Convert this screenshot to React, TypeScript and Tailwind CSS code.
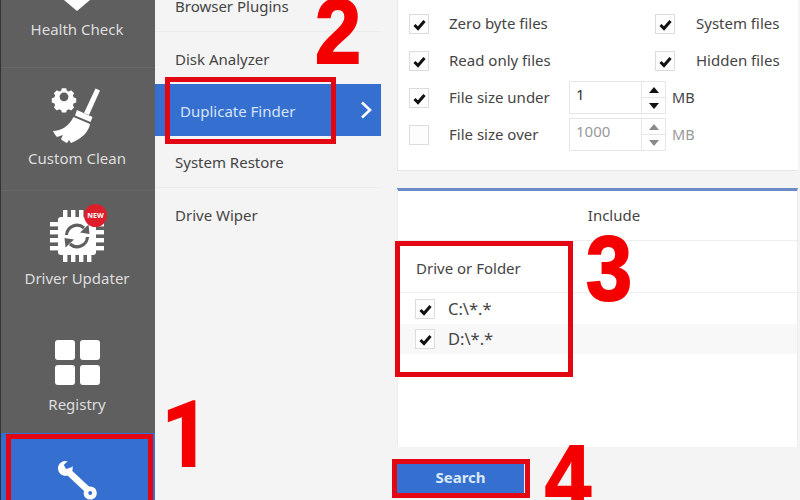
import React from "react";

const Check = () => (
  <svg viewBox="0 0 19 19" className="w-[19px] h-[19px] block">
    <path d="M4.5 10 L8 13.5 L14.5 6" fill="none" stroke="#111" strokeWidth="3" />
  </svg>
);

function Box({ on, muted }: { on?: boolean; muted?: boolean }) {
  return (
    <span className={`block w-[20px] h-[20px] shrink-0 border ${muted ? "border-[#e2e2e2]" : "border-[#dcdcdc]"} bg-[#fdfdfd]`}>
      {on ? <Check /> : null}
    </span>
  );
}

function Spin({ value, muted }: { value: string; muted?: boolean }) {
  const fill = muted ? "#8a8a8a" : "#111";
  return (
    <div className="flex items-center">
      <div className="flex w-[97px] h-[33px] border border-[#e6e6e6] bg-white">
        <div className={`w-[71px] pl-[6px] text-[15px] leading-[24px] ${muted ? "text-[#999]" : "text-[#333]"}`}>{value}</div>
        <div className="flex-1 flex flex-col border-l border-[#e6e6e6]">
          <div className="h-[16px] flex items-center justify-center border-b border-[#e6e6e6]">
            <svg viewBox="0 0 10 6" className="w-[10px] h-[6px]"><path d="M5 0 L10 6 L0 6 Z" fill={fill} /></svg>
          </div>
          <div className="flex-1 flex items-center justify-center">
            <svg viewBox="0 0 10 6" className="w-[10px] h-[6px]"><path d="M0 0 L10 0 L5 6 Z" fill={fill} /></svg>
          </div>
        </div>
      </div>
      <span className={`ml-[6px] text-[14.5px] ${muted ? "text-[#999]" : "text-[#444]"}`}>MB</span>
    </div>
  );
}

const Broom = () => (
  <svg viewBox="0 0 70 62" className="w-[70px] h-[62px] block">
    <g transform="translate(22 14)">
      <path d="M-2.6 -10.4 h5.2 l.8 3 2.6 1.1 2.7 -1.6 3.7 3.7 -1.6 2.7 1.1 2.6 3 .8 v5.2 l-3 .8 -1.1 2.6 1.6 2.7 -3.7 3.7 -2.7 -1.6 -2.6 1.1 -.8 3 h-5.2 l-.8 -3 -2.6 -1.1 -2.7 1.6 -3.7 -3.7 1.6 -2.7 -1.1 -2.6 -3 -.8 v-5.2 l3 -.8 1.1 -2.6 -1.6 -2.7 3.7 -3.7 2.7 1.6 2.6 -1.1 Z" transform="scale(.82) translate(0 -1.6)" fill="#fff" />
      <circle cx="0" cy="-1.2" r="4.4" fill="#5f5f5f" />
    </g>
    <path d="M53.5 4.5 L58 6.5 L47 31 L42 29 Z" fill="#fff" />
    <path d="M35 26 L50.5 33 L48.5 38 L33 31.5 Z" fill="#fff" />
    <path d="M31.5 33 L48 40 C47 47 40 55 29 59 L27 56 L25 59 C22 58 20 56 19 55 L21 51 L15 53 C13 51 12 49 11 47 C19 47 27 42 31.5 33 Z" fill="#fff" />
  </svg>
);

const Chip = () => (
  <svg viewBox="0 0 54 54" className="w-[54px] h-[54px] block">
    <g fill="#fff">
      <rect x="8" y="8" width="38" height="38" rx="3" />
      {[13, 21, 29, 37].map((p) => (
        <React.Fragment key={p}>
          <rect x={p} y="1" width="4.4" height="9" />
          <rect x={p} y="44" width="4.4" height="9" />
          <rect x="0" y={p} width="10" height="4.4" />
          <rect x="44" y={p} width="10" height="4.4" />
        </React.Fragment>
      ))}
    </g>
    <g fill="none" stroke="#5f5f5f" strokeWidth="3.2">
      <path d="M16.5 26 A10.5 10.5 0 0 1 34 19" />
      <path d="M37.5 28 A10.5 10.5 0 0 1 20 35" />
    </g>
    <path d="M30 23.5 L38.5 15.5 L39.5 25 Z" fill="#5f5f5f" />
    <path d="M24 30.5 L15.5 38.5 L14.5 29 Z" fill="#5f5f5f" />
  </svg>
);

const Wrench = () => (
  <svg viewBox="0 0 52 54" className="w-[52px] h-[54px] block">
    <path d="M12 15 L44 45" stroke="#fff" strokeWidth="8.5" fill="none" />
    <circle cx="11" cy="13.5" r="9.5" fill="#fff" />
    <path d="M16 2 L9 9 L12 14 L19 12 L24 4 Z" fill="#3570d0" />
    <circle cx="43" cy="45" r="8.5" fill="#fff" />
    <circle cx="43" cy="45" r="2.5" fill="#3570d0" />
  </svg>
);

function RedBox({ className }: { className: string }) {
  return <div className={`absolute border-[5px] border-[#e30613] ${className}`} />;
}

function Numeral({ n, className }: { n: string; className: string }) {
  return (
    <span className={`absolute text-[90px] leading-none font-bold text-[#f50000] [-webkit-text-stroke:2px_#f50000] scale-x-[0.92] ${className}`}>
      {n}
    </span>
  );
}

export default function App() {
  return (
    <div className="relative flex w-[800px] h-[500px] overflow-hidden bg-[#f4f4f4] font-['Noto_Sans',sans-serif] text-[15px] text-[#444]">
      <div className="w-px bg-[#333]" />
      <nav className="w-[154px] flex flex-col bg-[#5f5f5f] text-[#dedede]">
        <div className="h-[68px] flex flex-col items-center pr-[2px] border-b border-[#676767]">
          <svg viewBox="0 0 26 11" className="w-[26px] h-[11px] block"><path d="M0 0 H26 L13 11 Z" fill="#fff" /></svg>
          <span className="mt-[8px] leading-5">Health Check</span>
        </div>
        <div className="h-[123px] flex flex-col items-center pt-[16px] pr-[2px] border-b border-[#676767]">
          <Broom />
          <span className="mt-[2px] leading-5">Custom Clean</span>
        </div>
        <div className="h-[122px] flex flex-col items-center pt-[18px] pr-[2px]">
          <div className="relative">
            <Chip />
            <span className="absolute -top-[5px] -right-[3px] w-[23px] h-[23px] rounded-full bg-[#dc1f2b] text-white text-[7px] font-bold leading-[23px] text-center">NEW</span>
          </div>
          <span className="mt-[5px] leading-5">Driver Updater</span>
        </div>
        <div className="h-[120px] flex flex-col items-center pt-[27px] pr-[2px]">
          <div className="grid grid-cols-2 gap-[5px]">
            <div className="w-[20px] h-[20px] rounded-[3px] bg-white" />
            <div className="w-[20px] h-[20px] rounded-[3px] bg-white" />
            <div className="w-[20px] h-[20px] rounded-[3px] bg-white" />
            <div className="w-[20px] h-[20px] rounded-[3px] bg-white" />
          </div>
          <span className="mt-[9px] leading-5">Registry</span>
        </div>
        <div className="flex-1 flex flex-col items-center pt-[25px] pr-[2px] bg-[#3570d0] overflow-hidden">
          <Wrench />
        </div>
      </nav>

      <div className="w-[226px] flex flex-col text-[#444]">
        <div className="h-[32px] flex items-end pl-[20px] pb-[15px] border-b border-[#ececec] leading-5">Browser Plugins</div>
        <div className="h-[52px] flex items-center pl-[20px] pt-[2px]">Disk Analyzer</div>
        <div className="h-[52px] flex items-center justify-between pl-[25px] pr-[9px] bg-[#3570d0] text-[#d5e4f8]">
          <span className="pt-[3px]">Duplicate Finder</span>
          <svg viewBox="0 0 12 18" className="w-[12px] h-[18px]"><path d="M2 1.5 L10 9 L2 16.5" fill="none" stroke="#fff" strokeWidth="2.6" /></svg>
        </div>
        <div className="h-[52px] flex items-center pl-[20px] pt-[2px] border-b border-[#ececec]">System Restore</div>
        <div className="h-[52px] flex items-center pl-[20px] pt-[2px]">Drive Wiper</div>
      </div>

      <main className="flex-1 flex flex-col pl-[16px] pr-[2px]">
        <section className="h-[171px] bg-white border-l border-b border-[#e6e6e6] pt-[5px] pl-[11px]">
          <div className="h-[37px] flex items-center">
            <Box on />
            <span className="ml-[20px] w-[206px]">Zero byte files</span>
            <Box on />
            <span className="ml-[21px]">System files</span>
          </div>
          <div className="h-[37px] flex items-center">
            <Box on />
            <span className="ml-[20px] w-[206px]">Read only files</span>
            <Box on />
            <span className="ml-[21px]">Hidden files</span>
          </div>
          <div className="h-[37px] flex items-center">
            <Box on />
            <span className="ml-[20px] w-[120px]">File size under</span>
            <Spin value="1" />
          </div>
          <div className="h-[37px] flex items-center">
            <Box />
            <span className="ml-[20px] w-[120px]">File size over</span>
            <Spin value="1000" muted />
          </div>
        </section>

        <section className="mt-[17px] h-[259px] flex flex-col bg-white border-t-[3px] border-t-[#6c8cc9] border-l border-l-[#ededed] border-r border-r-[#ededed]">
          <div className="h-[50px] shrink-0 flex items-center justify-center pl-[33px] border-b border-[#eeeeee]">Include</div>
          <div className="h-[52px] shrink-0 flex items-center pl-[18px] pt-[3px] border-b border-[#eeeeee]">Drive or Folder</div>
          <div className="h-[31px] shrink-0 flex items-center pl-[17px]">
            <Box on />
            <span className="ml-[13px] text-[16.5px] pt-[2px]">C:\*.*</span>
          </div>
          <div className="h-[30px] shrink-0 flex items-center pl-[17px] bg-[#f8f8f8]">
            <Box on />
            <span className="ml-[13px] text-[16.5px]">D:\*.*</span>
          </div>
        </section>

        <div className="pt-[17px]">
          <button className="block w-[127px] h-[30px] pb-[3px] bg-[#3570d0] text-[#dbe8fa] font-bold text-[15px]">Search</button>
        </div>
      </main>

      <RedBox className="left-[6px] top-[434px] w-[147px] h-[80px]" />
      <RedBox className="left-[165px] top-[77px] w-[171px] h-[67px]" />
      <RedBox className="left-[395px] top-[241px] w-[178px] h-[136px]" />
      <RedBox className="left-[392px] top-[459px] w-[138px] h-[39px]" />
      <Numeral n="1" className="left-[160px] top-[391px] font-['Roboto',sans-serif]" />
      <Numeral n="2" className="left-[313px] top-[-13px] font-['Liberation_Sans',sans-serif]" />
      <Numeral n="3" className="left-[584px] top-[224px] font-['Liberation_Sans',sans-serif]" />
      <Numeral n="4" className="left-[543px] top-[433px] font-['Liberation_Sans',sans-serif]" />
    </div>
  );
}
